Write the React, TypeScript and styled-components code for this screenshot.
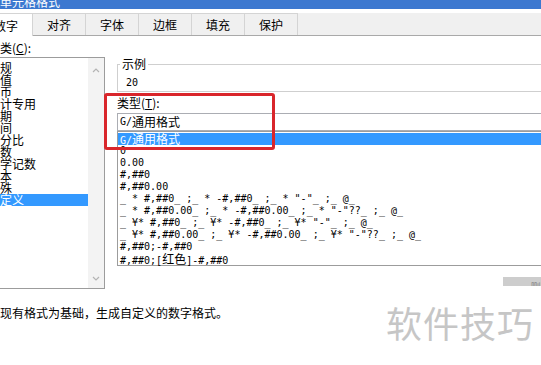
import styled, { createGlobalStyle } from 'styled-components';

const categories = ['常规', '数值', '货币', '会计专用', '日期', '时间', '百分比', '分数', '科学记数', '文本', '特殊', '自定义'];

const formats = [
  'G/通用格式',
  '0',
  '0.00',
  '#,##0',
  '#,##0.00',
  '_ * #,##0_ ;_ * -#,##0_ ;_ * "-"_ ;_ @_ ',
  '_ * #,##0.00_ ;_ * -#,##0.00_ ;_ * "-"??_ ;_ @_ ',
  '_ ¥* #,##0_ ;_ ¥* -#,##0_ ;_ ¥* "-"_ ;_ @_ ',
  '_ ¥* #,##0.00_ ;_ ¥* -#,##0.00_ ;_ ¥* "-"??_ ;_ @_ ',
  '#,##0;-#,##0',
  '#,##0;[红色]-#,##0',
];

const tabs = ['数字', '对齐', '字体', '边框', '填充', '保护'];

// mono text with full-width CJK runs, like the dialog's bitmap font
function Code({ text }: { text: string }) {
  return (
    <>
      {text.split(/([\u4e00-\u9fff]+)/).map((part, i) =>
        /[\u4e00-\u9fff]/.test(part) ? <Han key={i}>{part}</Han> : part
      )}
    </>
  );
}

function Chevron({ down }: { down?: boolean }) {
  return (
    <svg width="8" height="5" viewBox="0 0 8 5">
      <polyline
        points={down ? '1,1 4,4 7,1' : '1,4 4,1 7,4'}
        fill="none"
        stroke="#b4b4b4"
        strokeWidth="1.2"
      />
    </svg>
  );
}

export default function App() {
  return (
    <Page>
      <GlobalStyle />
      <Dialog>
        <TitleBar>
          <TitleText>设置单元格格式</TitleText>
        </TitleBar>
        <TabStrip>
          {tabs.map((t, i) => (
            <Tab key={t} $active={i === 0}>{t}</Tab>
          ))}
        </TabStrip>

        <Body>
          <Column>
            <Label>分类(<u>C</u>):</Label>
            <CategoryBox>
              <CategoryItems>
                {categories.map((c, i) => (
                  <CategoryItem key={c} $selected={i === categories.length - 1}>{c}</CategoryItem>
                ))}
              </CategoryItems>
              <ScrollBar>
                <Chevron />
                <Chevron down />
              </ScrollBar>
            </CategoryBox>
          </Column>

          <Column>
            <Sample>
              <Legend>示例</Legend>
              <SampleValue>20</SampleValue>
            </Sample>
            <TypeLabel>类型(<u>T</u>):</TypeLabel>
            <TypeInput><Code text="G/通用格式" /></TypeInput>
            <FormatList>
              {formats.map((f, i) => (
                <FormatRow key={f} $selected={i === 0}><Code text={f} /></FormatRow>
              ))}
            </FormatList>
            <DeleteButton>删除</DeleteButton>
          </Column>
        </Body>

        <Description>以现有格式为基础，生成自定义的数字格式。</Description>
      </Dialog>

      <Highlight />
      <Watermark>软件技巧</Watermark>
    </Page>
  );
}

const GlobalStyle = createGlobalStyle`
  html, body {
    margin: 0;
    background: #fff;
    overflow: hidden;
  }
`;

const Page = styled.div`
  position: relative;
  width: 541px;
  height: 365px;
  overflow: hidden;
  font-family: "Noto Sans CJK SC", sans-serif;
  font-size: 12px;
  line-height: 12px;
  color: #000;
`;

const Dialog = styled.div`
  width: 598px;
  margin-left: -20px;
`;

const TitleBar = styled.div`
  height: 9px;
  background: #3c78d0;
  display: flex;
  align-items: flex-end;
  overflow: hidden;
`;

const TitleText = styled.span`
  margin-left: -4px;
  color: #fff;
  font-size: 12px;
  line-height: 14px;
`;

const TabStrip = styled.div`
  margin-top: 4px;
  height: 23px;
  box-sizing: border-box;
  display: flex;
  background: #f0f0f0;
  border-bottom: 1px solid #a9a9a9;
`;

const Tab = styled.div<{ $active?: boolean }>`
  width: 53px;
  box-sizing: border-box;
  display: flex;
  align-items: center;
  justify-content: center;
  padding-top: 1px;
  border-top: 1px solid #d4d4d4;
  border-right: 1px solid #d4d4d4;
  background: ${p => (p.$active ? '#fff' : '#f0f0f0')};
  margin-bottom: ${p => (p.$active ? '-1px' : '0')};
`;

const Body = styled.div`
  display: grid;
  grid-template-columns: 119px 1fr;
  column-gap: 12px;
  padding: 6px 0 0 6px;
`;

const Column = styled.div`
  display: flex;
  flex-direction: column;
  min-width: 0;
`;

const Label = styled.div`
  padding-left: 2px;
  margin-bottom: 3px;
  line-height: 12px;
`;

const CategoryBox = styled.div`
  height: 232px;
  box-sizing: border-box;
  border: 1px solid #9c9c9c;
  display: flex;
`;

const CategoryItems = styled.div`
  flex: 1;
  padding-top: 4px;
  display: flex;
  flex-direction: column;
`;

const CategoryItem = styled.div<{ $selected?: boolean }>`
  height: 12px;
  line-height: 12px;
  padding-left: 1px;
  white-space: nowrap;
  background: ${p => (p.$selected ? '#3399ff' : 'transparent')};
  color: ${p => (p.$selected ? '#fff' : '#000')};
`;

const ScrollBar = styled.div`
  width: 16px;
  background: #f3f3f3;
  display: flex;
  flex-direction: column;
  justify-content: space-between;
  align-items: center;
  padding: 10px 0 7px;
`;

const Sample = styled.fieldset`
  margin: 16px 0 0;
  min-width: 0;
  padding: 7px 0 2px 8px;
  border: 1px solid #cfcfcf;
  border-right: none;
`;

const Legend = styled.legend`
  margin-left: -6px;
  padding: 0 2px;
  line-height: 12px;
`;

const SampleValue = styled.div`
  font-family: "DejaVu Sans Mono", monospace;
  font-size: 10px;
  line-height: 12px;
`;

const TypeLabel = styled.div`
  margin-top: 5px;
  line-height: 12px;
`;

const TypeInput = styled.div`
  margin-top: 4px;
  height: 18px;
  box-sizing: border-box;
  border: 1px solid #abadb3;
  border-right: none;
  padding-left: 2px;
  display: flex;
  align-items: center;
  font-family: "DejaVu Sans Mono", "Noto Sans CJK SC", monospace;
  font-size: 10px;
  white-space: pre;
`;

const FormatList = styled.div`
  height: 135px;
  box-sizing: border-box;
  border: 1px solid #9c9c9c;
  border-right: none;
  padding-top: 1px;
  display: flex;
  flex-direction: column;
  font-family: "DejaVu Sans Mono", "Noto Sans CJK SC", monospace;
  font-size: 10px;
`;

const FormatRow = styled.div<{ $selected?: boolean }>`
  height: 12px;
  line-height: 12px;
  padding-left: 2px;
  white-space: pre;
  background: ${p => (p.$selected ? '#3399ff' : 'transparent')};
  color: ${p => (p.$selected ? '#fff' : '#000')};
`;

const Han = styled.span`
  font-family: "Noto Sans CJK SC", sans-serif;
  font-size: 12px;
`;

const DeleteButton = styled.div`
  align-self: flex-end;
  margin-top: 11px;
  width: 75px;
  height: 9px;
  overflow: hidden;
  background: #cdcdcd;
  color: #8a8a8a;
  font-size: 10px;
  line-height: 10px;
  padding-top: 5px;
  box-sizing: border-box;
  text-align: center;
`;

const Description = styled.div`
  margin-top: 18px;
  padding-left: 8px;
  line-height: 12px;
`;

const Highlight = styled.div`
  position: absolute;
  left: 104px;
  top: 93px;
  width: 171px;
  height: 57px;
  box-sizing: border-box;
  border: 3px solid #d9262b;
  border-radius: 3px;
`;

const Watermark = styled.div`
  position: absolute;
  left: 386px;
  top: 302px;
  font-size: 36px;
  line-height: 40px;
  color: #c6c6c6;
  letter-spacing: 1px;
`;
